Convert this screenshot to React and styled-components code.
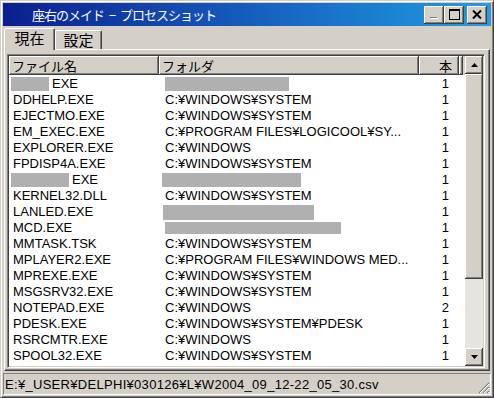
import React from 'react';
import styled, { createGlobalStyle } from 'styled-components';

const GlobalStyle = createGlobalStyle`
  html, body {
    margin: 0;
    padding: 0;
    background: #d4d0c8;
  }
  body {
    font-family: "Liberation Sans", Arial, sans-serif;
    font-size: 13px;
  }
`;

const raised = `
  box-shadow: inset -1px -1px #404040, inset 1px 1px #ffffff, inset -2px -2px #808080;
`;

const Window = styled.div`
  width: 494px;
  height: 398px;
  box-sizing: border-box;
  background: #d4d0c8;
  border: 1px solid;
  border-color: #d4d0c8 #404040 #404040 #d4d0c8;
  box-shadow: inset 1px 1px #ffffff, inset -1px -1px #808080;
  padding: 2px;
  display: flex;
  flex-direction: column;
`;

const TitleBar = styled.div`
  height: 23px;
  flex: none;
  display: flex;
  align-items: center;
  padding: 0 4px 0 29px;
  background: linear-gradient(to right, #0a1f8f 0%, #1450b4 40%, #1c8ad8 85%, #2a9ae0 100%);
  color: #ffffff;
`;

const Title = styled.span`
  font-family: "Noto Sans CJK JP", sans-serif;
  font-size: 13px;
  font-weight: normal;
  letter-spacing: -1px;
  word-spacing: 3px;
`;

const TitleButtons = styled.div`
  margin-left: auto;
  display: flex;
  align-items: center;
`;

const TitleButton = styled.div`
  width: 20px;
  height: 18px;
  box-sizing: border-box;
  background: #d4d0c8;
  ${raised}
  display: flex;
  align-items: center;
  justify-content: center;
  margin-left: ${({ gap }) => gap || 0}px;
`;

const TabStrip = styled.div`
  height: 23px;
  flex: none;
  display: flex;
  align-items: flex-end;
  padding-left: 1px;
`;

const Tab = styled.div`
  position: relative;
  z-index: 1;
  box-sizing: border-box;
  height: ${({ active }) => (active ? 22 : 19)}px;
  width: ${({ w }) => w}px;
  margin-bottom: ${({ active }) => (active ? -1 : 0)}px;
  background: #d4d0c8;
  border-top: 1px solid #ffffff;
  border-left: 1px solid #ffffff;
  border-right: 1px solid #404040;
  border-radius: 2px 2px 0 0;
  box-shadow: inset -1px 0 #808080;
  font-family: "Noto Sans CJK JP", sans-serif;
  font-size: 15px;
  line-height: 18px;
  text-align: center;
  color: #000;
`;

const Panel = styled.div`
  height: 322px;
  flex: none;
  margin: 0 1px;
  box-sizing: border-box;
  border: 1px solid;
  border-color: #ffffff #404040 #404040 #ffffff;
  box-shadow: inset -1px -1px #808080;
  padding: 4px 4px 0 2px;
`;

const ListView = styled.div`
  height: 314px;
  box-sizing: border-box;
  border: 1px solid;
  border-color: #808080 #ffffff #ffffff #808080;
  box-shadow: inset 1px 1px #404040, inset -1px -1px #d4d0c8;
  padding: 1px;
  display: flex;
  background: #ffffff;
`;

const ListMain = styled.div`
  flex: 1;
  min-height: 0;
  display: flex;
  flex-direction: column;
  overflow: hidden;
`;

const Header = styled.div`
  display: flex;
  height: 19px;
  flex: none;
  background: #d4d0c8;
`;

const HeaderCell = styled.div`
  width: ${({ w }) => w}px;
  flex: none;
  box-sizing: border-box;
  ${raised}
  padding: ${({ align }) => (align === 'right' ? '0 7px 0 0' : '0 0 0 3px')};
  text-align: ${({ align }) => align || 'left'};
  font-family: "Noto Sans CJK JP", sans-serif;
  font-size: 13px;
  line-height: 19px;
  color: #000;
`;

const Rows = styled.div`
  flex: 1;
  min-height: 0;
  padding-top: 1px;
  overflow: hidden;
`;

const Row = styled.div`
  display: flex;
  height: 16px;
  line-height: 16px;
  color: #000;
`;

const Cell = styled.div`
  width: ${({ w }) => w}px;
  flex: none;
  box-sizing: border-box;
  padding-left: ${({ pad }) => pad || 0}px;
  padding-right: ${({ padRight }) => padRight || 0}px;
  display: flex;
  align-items: center;
  justify-content: ${({ align }) => (align === 'right' ? 'flex-end' : 'flex-start')};
  white-space: nowrap;
  overflow: hidden;
`;

const Redact = styled.span`
  display: inline-block;
  width: ${({ w }) => w}px;
  height: ${({ h }) => h || 14}px;
  margin-left: ${({ shift }) => shift || 0}px;
  margin-right: ${({ after }) => after || 0}px;
  background: #b0b0b0;
`;

const ScrollBar = styled.div`
  width: 18px;
  flex: none;
  display: flex;
  flex-direction: column;
  background: #e6e4de;
`;

const ScrollButton = styled.div`
  width: 18px;
  height: 18px;
  flex: none;
  box-sizing: border-box;
  background: #d4d0c8;
  ${raised}
  display: flex;
  align-items: center;
  justify-content: center;
`;

const Thumb = styled.div`
  height: ${({ h }) => h}px;
  flex: none;
  box-sizing: border-box;
  background: #d4d0c8;
  ${raised}
`;

const Track = styled.div`
  flex: 1;
`;

const StatusBar = styled.div`
  margin-top: 2px;
  height: 22px;
  flex: none;
  box-sizing: border-box;
  border: 1px solid;
  border-color: #808080 #ffffff #ffffff #808080;
  display: flex;
  align-items: center;
  padding-left: 1px;
  position: relative;
  letter-spacing: 0.3px;
  color: #000;
`;

const Grip = styled.svg`
  position: absolute;
  right: 0;
  bottom: 0;
`;

const rows = [
  { name: 'EXE', nameBlank: 38, folderBlank: 124, count: 1 },
  { name: 'DDHELP.EXE', folder: 'C:¥WINDOWS¥SYSTEM', count: 1 },
  { name: 'EJECTMO.EXE', folder: 'C:¥WINDOWS¥SYSTEM', count: 1 },
  { name: 'EM_EXEC.EXE', folder: 'C:¥PROGRAM FILES¥LOGICOOL¥SY...', count: 1 },
  { name: 'EXPLORER.EXE', folder: 'C:¥WINDOWS', count: 1 },
  { name: 'FPDISP4A.EXE', folder: 'C:¥WINDOWS¥SYSTEM', count: 1 },
  { name: 'EXE', nameBlank: 58, folderBlank: 139, folderShift: -3, count: 1 },
  { name: 'KERNEL32.DLL', folder: 'C:¥WINDOWS¥SYSTEM', count: 1 },
  { name: 'LANLED.EXE', folderBlank: 151, folderShift: -2, blankH: 15, count: 1 },
  { name: 'MCD.EXE', folderBlank: 176, blankH: 12, count: 1 },
  { name: 'MMTASK.TSK', folder: 'C:¥WINDOWS¥SYSTEM', count: 1 },
  { name: 'MPLAYER2.EXE', folder: 'C:¥PROGRAM FILES¥WINDOWS MED...', count: 1 },
  { name: 'MPREXE.EXE', folder: 'C:¥WINDOWS¥SYSTEM', count: 1 },
  { name: 'MSGSRV32.EXE', folder: 'C:¥WINDOWS¥SYSTEM', count: 1 },
  { name: 'NOTEPAD.EXE', folder: 'C:¥WINDOWS', count: 2 },
  { name: 'PDESK.EXE', folder: 'C:¥WINDOWS¥SYSTEM¥PDESK', count: 1 },
  { name: 'RSRCMTR.EXE', folder: 'C:¥WINDOWS', count: 1 },
  { name: 'SPOOL32.EXE', folder: 'C:¥WINDOWS¥SYSTEM', count: 1 },
  { name: 'SYSTRAY.EXE', folder: 'C:¥WINDOWS¥SYSTEM', count: 1 },
];

const UpArrow = () => (
  <svg width="7" height="4" viewBox="0 0 7 4">
    <path d="M3.5 0 L7 4 L0 4 Z" fill="#000" />
  </svg>
);

const DownArrow = () => (
  <svg width="7" height="4" viewBox="0 0 7 4">
    <path d="M0 0 L7 0 L3.5 4 Z" fill="#000" />
  </svg>
);

const App = () => (
  <>
    <GlobalStyle />
    <Window>
      <TitleBar>
        <Title>座右のメイド − プロセスショット</Title>
        <TitleButtons>
          <TitleButton>
            <svg width="12" height="10" viewBox="0 0 12 10">
              <rect x="2" y="7" width="7" height="1" fill="#808080" />
              <rect x="3" y="8" width="7" height="1" fill="#ffffff" />
            </svg>
          </TitleButton>
          <TitleButton>
            <svg width="11" height="11" viewBox="0 0 11 11">
              <rect x="0.5" y="0.5" width="10" height="10" fill="none" stroke="#000" />
              <rect x="0" y="1" width="11" height="1" fill="#000" />
            </svg>
          </TitleButton>
          <TitleButton gap={3}>
            <svg width="10" height="9" viewBox="0 0 10 9">
              <path d="M1 0.5 L9 8.5 M9 0.5 L1 8.5" stroke="#000" strokeWidth="2" />
            </svg>
          </TitleButton>
        </TitleButtons>
      </TitleBar>

      <TabStrip>
        <Tab active w={51}>現在</Tab>
        <Tab w={47}>設定</Tab>
      </TabStrip>

      <Panel>
        <ListView>
          <ListMain>
            <Header>
              <HeaderCell w={150}>ファイル名</HeaderCell>
              <HeaderCell w={260}>フォルダ</HeaderCell>
              <HeaderCell w={40} align="right">本</HeaderCell>
              <HeaderCell w={4} />
            </Header>
            <Rows>
              {rows.map((r, i) => (
                <Row key={i}>
                  <Cell w={150} pad={4}>
                    {r.nameBlank && <Redact w={r.nameBlank} shift={-2} after={3} />}
                    {r.name}
                  </Cell>
                  <Cell w={260} pad={6}>
                    {r.folderBlank
                      ? <Redact w={r.folderBlank} shift={r.folderShift} h={r.blankH} />
                      : r.folder}
                  </Cell>
                  <Cell w={40} align="right" padRight={10}>{r.count}</Cell>
                </Row>
              ))}
            </Rows>
          </ListMain>
          <ScrollBar>
            <ScrollButton><UpArrow /></ScrollButton>
            <Thumb h={205} />
            <Track />
            <ScrollButton><DownArrow /></ScrollButton>
          </ScrollBar>
        </ListView>
      </Panel>

      <StatusBar>
        E:¥_USER¥DELPHI¥030126¥L¥W2004_09_12-22_05_30.csv
        <Grip width="12" height="12" viewBox="0 0 12 12">
          <path d="M11 1 L1 11 M11 5 L5 11 M11 9 L9 11" stroke="#808080" strokeWidth="1.2" />
          <path d="M11 2 L2 11 M11 6 L6 11 M11 10 L10 11" stroke="#ffffff" strokeWidth="1" />
        </Grip>
      </StatusBar>
    </Window>
  </>
);

export default App;
